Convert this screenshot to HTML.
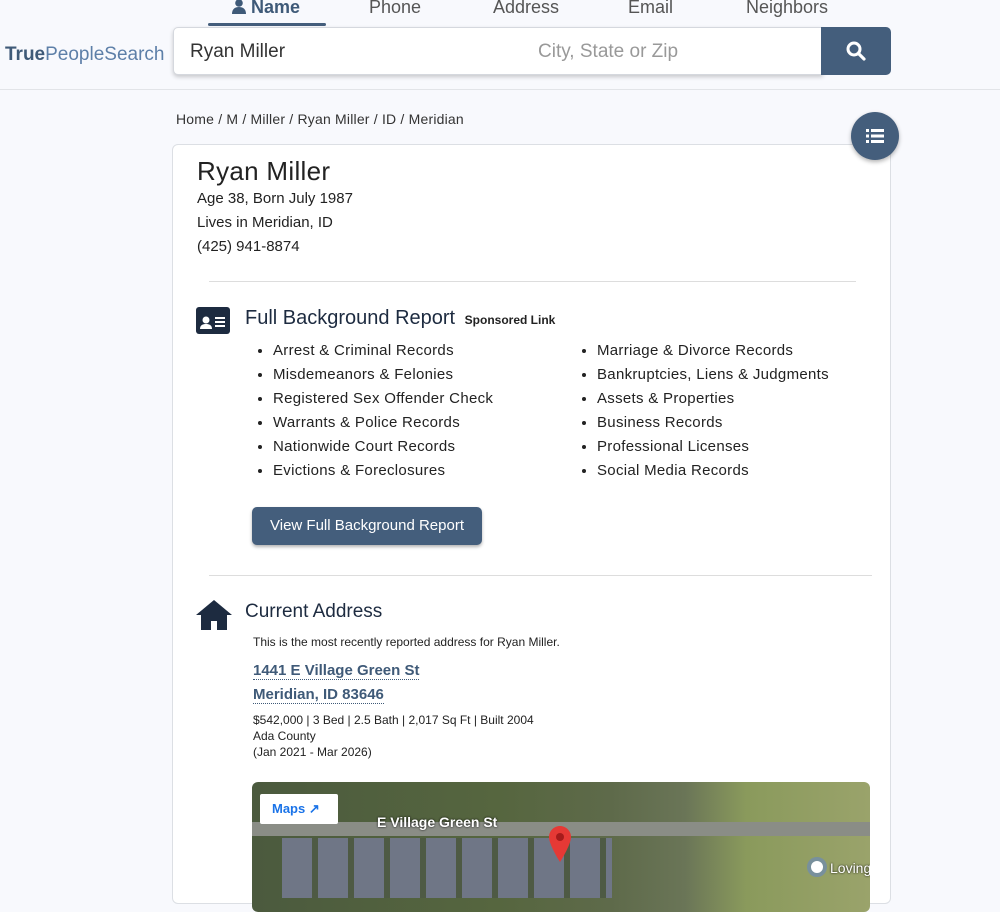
<!DOCTYPE html>
<html><head><meta charset="utf-8"><style>
*{box-sizing:border-box;margin:0;padding:0}
body{width:1000px;height:889px;overflow:hidden;background:#f8f9fd;font-family:"Liberation Sans",sans-serif;color:#222;position:relative}
.a{position:absolute}
.tab{position:absolute;top:-3px;font-size:18px;color:#555}
.logo{left:5px;top:44px;font-size:19px;color:#5d7fa8}
.logo b{color:#3f5a78}
.search{left:173px;top:27px;width:650px;height:48px;background:#fff;border:1px solid #d5d8de;border-radius:5px 0 0 5px;box-shadow:0 2px 4px rgba(0,0,0,.2)}
.btn{left:821px;top:27px;width:70px;height:48px;background:#445e7c;border-radius:0 5px 5px 0}
.card{left:172px;top:144px;width:719px;height:760px;background:#fff;border:1px solid #dcdfe4;border-radius:6px}
ul{list-style:disc;font-size:15px;line-height:24px;color:#222;letter-spacing:.3px}
.link{color:#3f5a78;font-size:15px;font-weight:bold;border-bottom:1px dotted #3f5a78}
</style></head><body>
<div class="tab" style="left:232px;color:#3f5a78;font-weight:bold">
<svg width="14" height="15" viewBox="0 0 14 15" style="vertical-align:-1px"><circle cx="7" cy="4" r="3.8" fill="#3f5a78"/><path d="M0 15c0-5 3-7 7-7s7 2 7 7z" fill="#3f5a78"/></svg> Name</div>
<div class="a" style="left:208px;top:23px;width:118px;height:3px;background:#445e7c;border-radius:2px"></div>
<div class="tab" style="left:369px">Phone</div>
<div class="tab" style="left:493px">Address</div>
<div class="tab" style="left:628px">Email</div>
<div class="tab" style="left:746px">Neighbors</div>
<div class="a logo"><b>True</b>PeopleSearch</div>
<div class="a search"><span class="a" style="left:16px;top:13px;font-size:19px;color:#333">Ryan Miller</span><span class="a" style="left:364px;top:13px;font-size:19px;color:#999">City, State or Zip</span></div>
<div class="a btn"><svg class="a" style="left:25px;top:14px" width="20" height="20" viewBox="0 0 20 20"><circle cx="8" cy="8" r="6" stroke="#fff" stroke-width="3" fill="none"/><path d="M12.5 12.5l5.5 5.5" stroke="#fff" stroke-width="3.2" stroke-linecap="round"/></svg></div>
<div class="a" style="left:0;top:89px;width:1000px;height:1px;background:#e2e4e8"></div>
<div class="a" style="left:176px;top:111px;font-size:14px;color:#333;letter-spacing:.2px">Home / M / Miller / Ryan Miller / ID / Meridian</div>
<div class="a card">
<div class="a" style="left:24px;top:11px;font-size:26px;color:#222;letter-spacing:.3px">Ryan Miller</div>
<div class="a" style="left:24px;top:42px;font-size:15px;line-height:24px">Age 38, Born July 1987<br>Lives in Meridian, ID<br>(425) 941-8874</div>
<div class="a" style="left:36px;top:136px;width:647px;height:1px;background:#ddd"></div>
<svg class="a" style="left:23px;top:162px" width="34" height="27" viewBox="0 0 34 27"><rect width="34" height="27" rx="3" fill="#1d2b40"/><circle cx="10" cy="13" r="3.5" fill="#fff"/><path d="M4 22c0-4 3-5 6-5s6 1 6 5z" fill="#fff"/><rect x="19" y="10" width="10" height="2" fill="#fff"/><rect x="19" y="14" width="10" height="2" fill="#fff"/><rect x="19" y="18" width="10" height="2" fill="#fff"/></svg>
<div class="a" style="left:72px;top:162px;font-size:20px;color:#1d2b40">Full Background Report <span style="font-size:12px;font-weight:bold;color:#222;margin-left:4px">Sponsored Link</span></div>
<ul class="a" style="left:100px;top:194px"><li>Arrest &amp; Criminal Records</li><li>Misdemeanors &amp; Felonies</li><li>Registered Sex Offender Check</li><li>Warrants &amp; Police Records</li><li>Nationwide Court Records</li><li>Evictions &amp; Foreclosures</li></ul>
<ul class="a" style="left:424px;top:194px"><li>Marriage &amp; Divorce Records</li><li>Bankruptcies, Liens &amp; Judgments</li><li>Assets &amp; Properties</li><li>Business Records</li><li>Professional Licenses</li><li>Social Media Records</li></ul>
<div class="a" style="left:79px;top:362px;width:230px;height:38px;background:#445e7c;border-radius:5px;color:#fff;font-size:15px;text-align:center;line-height:38px;box-shadow:0 2px 3px rgba(0,0,0,.3)">View Full Background Report</div>
<div class="a" style="left:36px;top:430px;width:663px;height:1px;background:#ddd"></div>
<svg class="a" style="left:23px;top:454px" width="36" height="32" viewBox="0 0 36 32"><path d="M18 1L0 16h5v15h10v-9h6v9h10V16h5z" fill="#1d2b40"/></svg>
<div class="a" style="left:72px;top:456px;font-size:19px;color:#1d2b40">Current Address</div>
<div class="a" style="left:80px;top:490px;font-size:12px">This is the most recently reported address for Ryan Miller.</div>
<div class="a" style="left:80px;top:514px;line-height:24px"><span class="link">1441 E Village Green St</span><br><span class="link">Meridian, ID 83646</span></div>
<div class="a" style="left:80px;top:567px;font-size:12px;line-height:16px">$542,000 | 3 Bed | 2.5 Bath | 2,017 Sq Ft | Built 2004<br>Ada County<br>(Jan 2021 - Mar 2026)</div>
<div class="a" style="left:79px;top:637px;width:618px;height:130px;border-radius:6px;overflow:hidden;background:linear-gradient(90deg,#4b5a3e 0%,#56663f 40%,#5e6a4a 58%,#6a7557 70%,#8a9a5c 80%,#9aa36b 100%)">
<div class="a" style="left:0;top:40px;width:618px;height:14px;background:#8a8d86"></div>
<div class="a" style="left:30px;top:56px;width:330px;height:60px;background:repeating-linear-gradient(90deg,#6f7686 0 30px,#4e5a44 30px 36px)"></div>
<div class="a" style="left:8px;top:12px;width:78px;height:30px;background:#fff;border-radius:2px;color:#1a73e8;font-size:13px;font-weight:bold;line-height:30px;padding-left:12px">Maps ↗</div>
<div class="a" style="left:125px;top:32px;color:#fff;font-size:14px;font-weight:bold;text-shadow:0 0 2px #000">E Village Green St</div>
<svg class="a" style="left:297px;top:44px" width="22" height="36" viewBox="0 0 22 36"><path d="M11 0C5 0 0 5 0 11c0 8 11 25 11 25s11-17 11-25C22 5 17 0 11 0z" fill="#e53935"/><circle cx="11" cy="11" r="4" fill="#a51b1b"/></svg>
<div class="a" style="left:555px;top:75px;width:20px;height:20px;border-radius:50%;background:#fff;border:4px solid #78909c"></div>
<div class="a" style="left:578px;top:78px;color:#fff;font-size:14px;text-shadow:0 0 2px #000">Loving</div>
</div>
</div>
<div class="a" style="left:851px;top:112px;width:48px;height:48px;border-radius:50%;background:#445e7c;box-shadow:0 2px 4px rgba(0,0,0,.3)"><svg class="a" style="left:15px;top:16px" width="18" height="16" viewBox="0 0 18 16"><g fill="#fff"><rect x="0" y="1" width="3" height="3"/><rect x="5" y="1" width="13" height="3"/><rect x="0" y="6.5" width="3" height="3"/><rect x="5" y="6.5" width="13" height="3"/><rect x="0" y="12" width="3" height="3"/><rect x="5" y="12" width="13" height="3"/></g></svg></div>
</body></html>
